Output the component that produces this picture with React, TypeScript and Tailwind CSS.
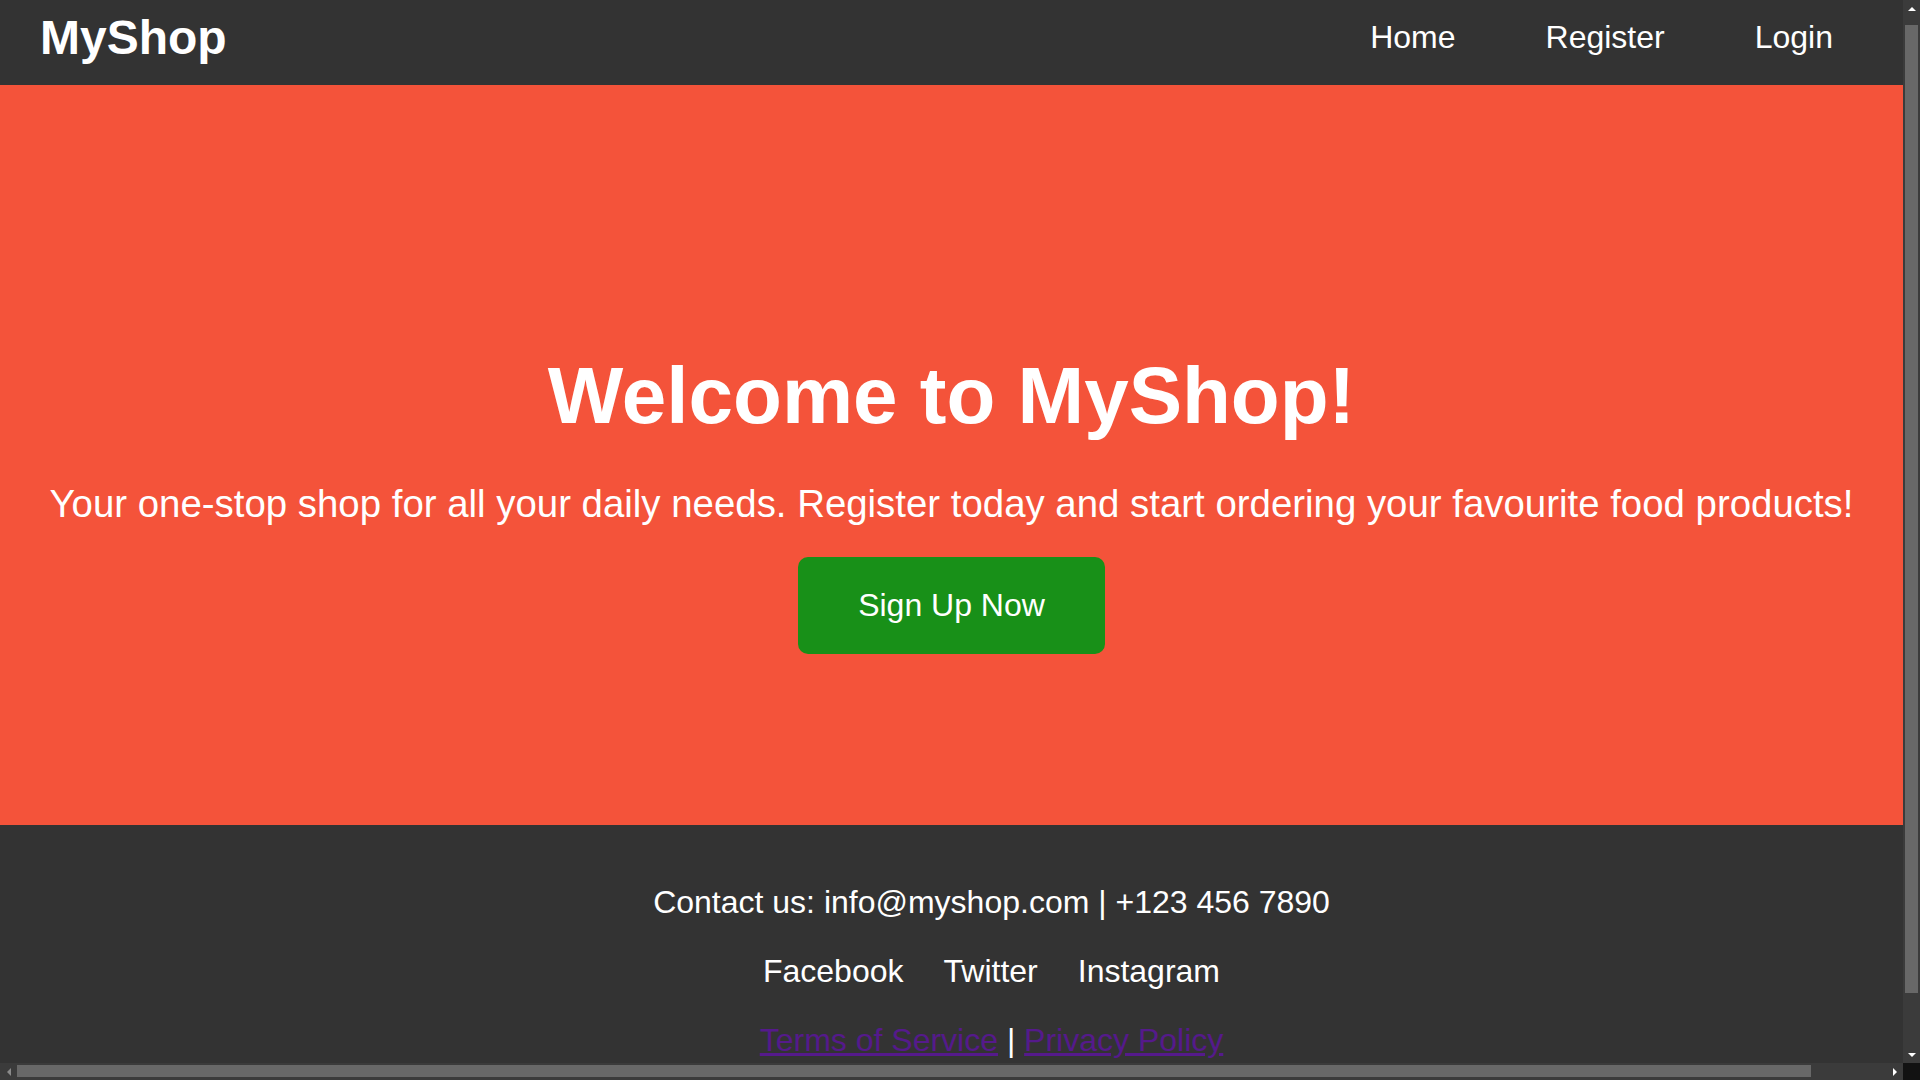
import React from "react";

function Tri({ dir, color }: { dir: "up" | "down" | "left" | "right"; color: string }) {
  const pts =
    dir === "up"
      ? "0,4 4,0 8,4"
      : dir === "down"
      ? "0,0 8,0 4,4"
      : dir === "left"
      ? "4,0 4,8 0,4"
      : "0,0 0,8 4,4";
  const w = dir === "up" || dir === "down" ? 8 : 4;
  const h = dir === "up" || dir === "down" ? 4 : 8;
  return (
    <svg width={w} height={h} viewBox={`0 0 ${w} ${h}`}>
      <polygon points={pts} fill={color} />
    </svg>
  );
}

export default function App() {
  return (
    <div className="h-screen w-screen overflow-hidden flex flex-col font-['Liberation_Sans',Arial,sans-serif]">
      <div className="flex flex-1 min-h-0">
        <div className="flex-1 min-w-0 overflow-hidden bg-white">
          <header className="box-content w-full px-10 h-[75px] pb-[10px] bg-[#333333] text-white flex items-center justify-between">
            <div className="text-[48px] font-bold leading-[normal]">MyShop</div>
            <nav className="flex gap-[90px] mr-[110px] text-[32px] leading-[normal]">
              <a href="#" className="text-white no-underline">Home</a>
              <a href="#" className="text-white no-underline">Register</a>
              <a href="#" className="text-white no-underline">Login</a>
            </nav>
          </header>

          <section className="bg-[#f4533a] text-white flex flex-col items-center pt-[265px] pb-[171px]">
            <h1 className="text-[80px] font-bold leading-[normal] whitespace-nowrap">Welcome to MyShop!</h1>
            <p className="mt-[40px] text-[38.4px] leading-[normal] whitespace-nowrap">
              Your one-stop shop for all your daily needs. Register today and start ordering your favourite food products!
            </p>
            <button className="mt-[31px] px-[60px] py-[30px] text-[32px] leading-[normal] rounded-[10px] bg-[#189018] text-white">
              Sign Up Now
            </button>
          </section>

          <footer className="box-content w-full px-10 bg-[#333333] text-white text-[32px] leading-[normal] pt-[59px] pb-[72px] flex flex-col items-center gap-8">
            <p className="whitespace-nowrap">Contact us: info@myshop.com | +123 456 7890</p>
            <div className="flex gap-10 whitespace-nowrap">
              <a href="#" className="text-white">Facebook</a>
              <a href="#" className="text-white">Twitter</a>
              <a href="#" className="text-white">Instagram</a>
            </div>
            <p className="whitespace-nowrap">
              <a href="#" className="text-[#551a8b] underline">Terms of Service</a> |{" "}
              <a href="#" className="text-[#551a8b] underline">Privacy Policy</a>
            </p>
          </footer>
        </div>

        {/* vertical scrollbar */}
        <div className="w-[17px] bg-[#3b3b3b] flex flex-col">
          <div className="h-[17px] flex items-center justify-center">
            <Tri dir="up" color="#ffffff" />
          </div>
          <div className="flex-1 min-h-0 pt-[8px] pl-[2px]">
            <div className="w-[13px] h-[968px] bg-[#686868]" />
          </div>
          <div className="h-[17px] flex items-center justify-center">
            <Tri dir="down" color="#ffffff" />
          </div>
        </div>
      </div>

      {/* horizontal scrollbar */}
      <div className="h-[17px] flex bg-[#3b3b3b]">
        <div className="w-[17px] flex items-center justify-center">
          <Tri dir="left" color="#8a8a8a" />
        </div>
        <div className="flex-1 min-w-0 pt-[2px]">
          <div className="w-[1794px] h-[12px] bg-[#686868]" />
        </div>
        <div className="w-[17px] flex items-center justify-center">
          <Tri dir="right" color="#ffffff" />
        </div>
        <div className="w-[17px] bg-[#121212]" />
      </div>
    </div>
  );
}
